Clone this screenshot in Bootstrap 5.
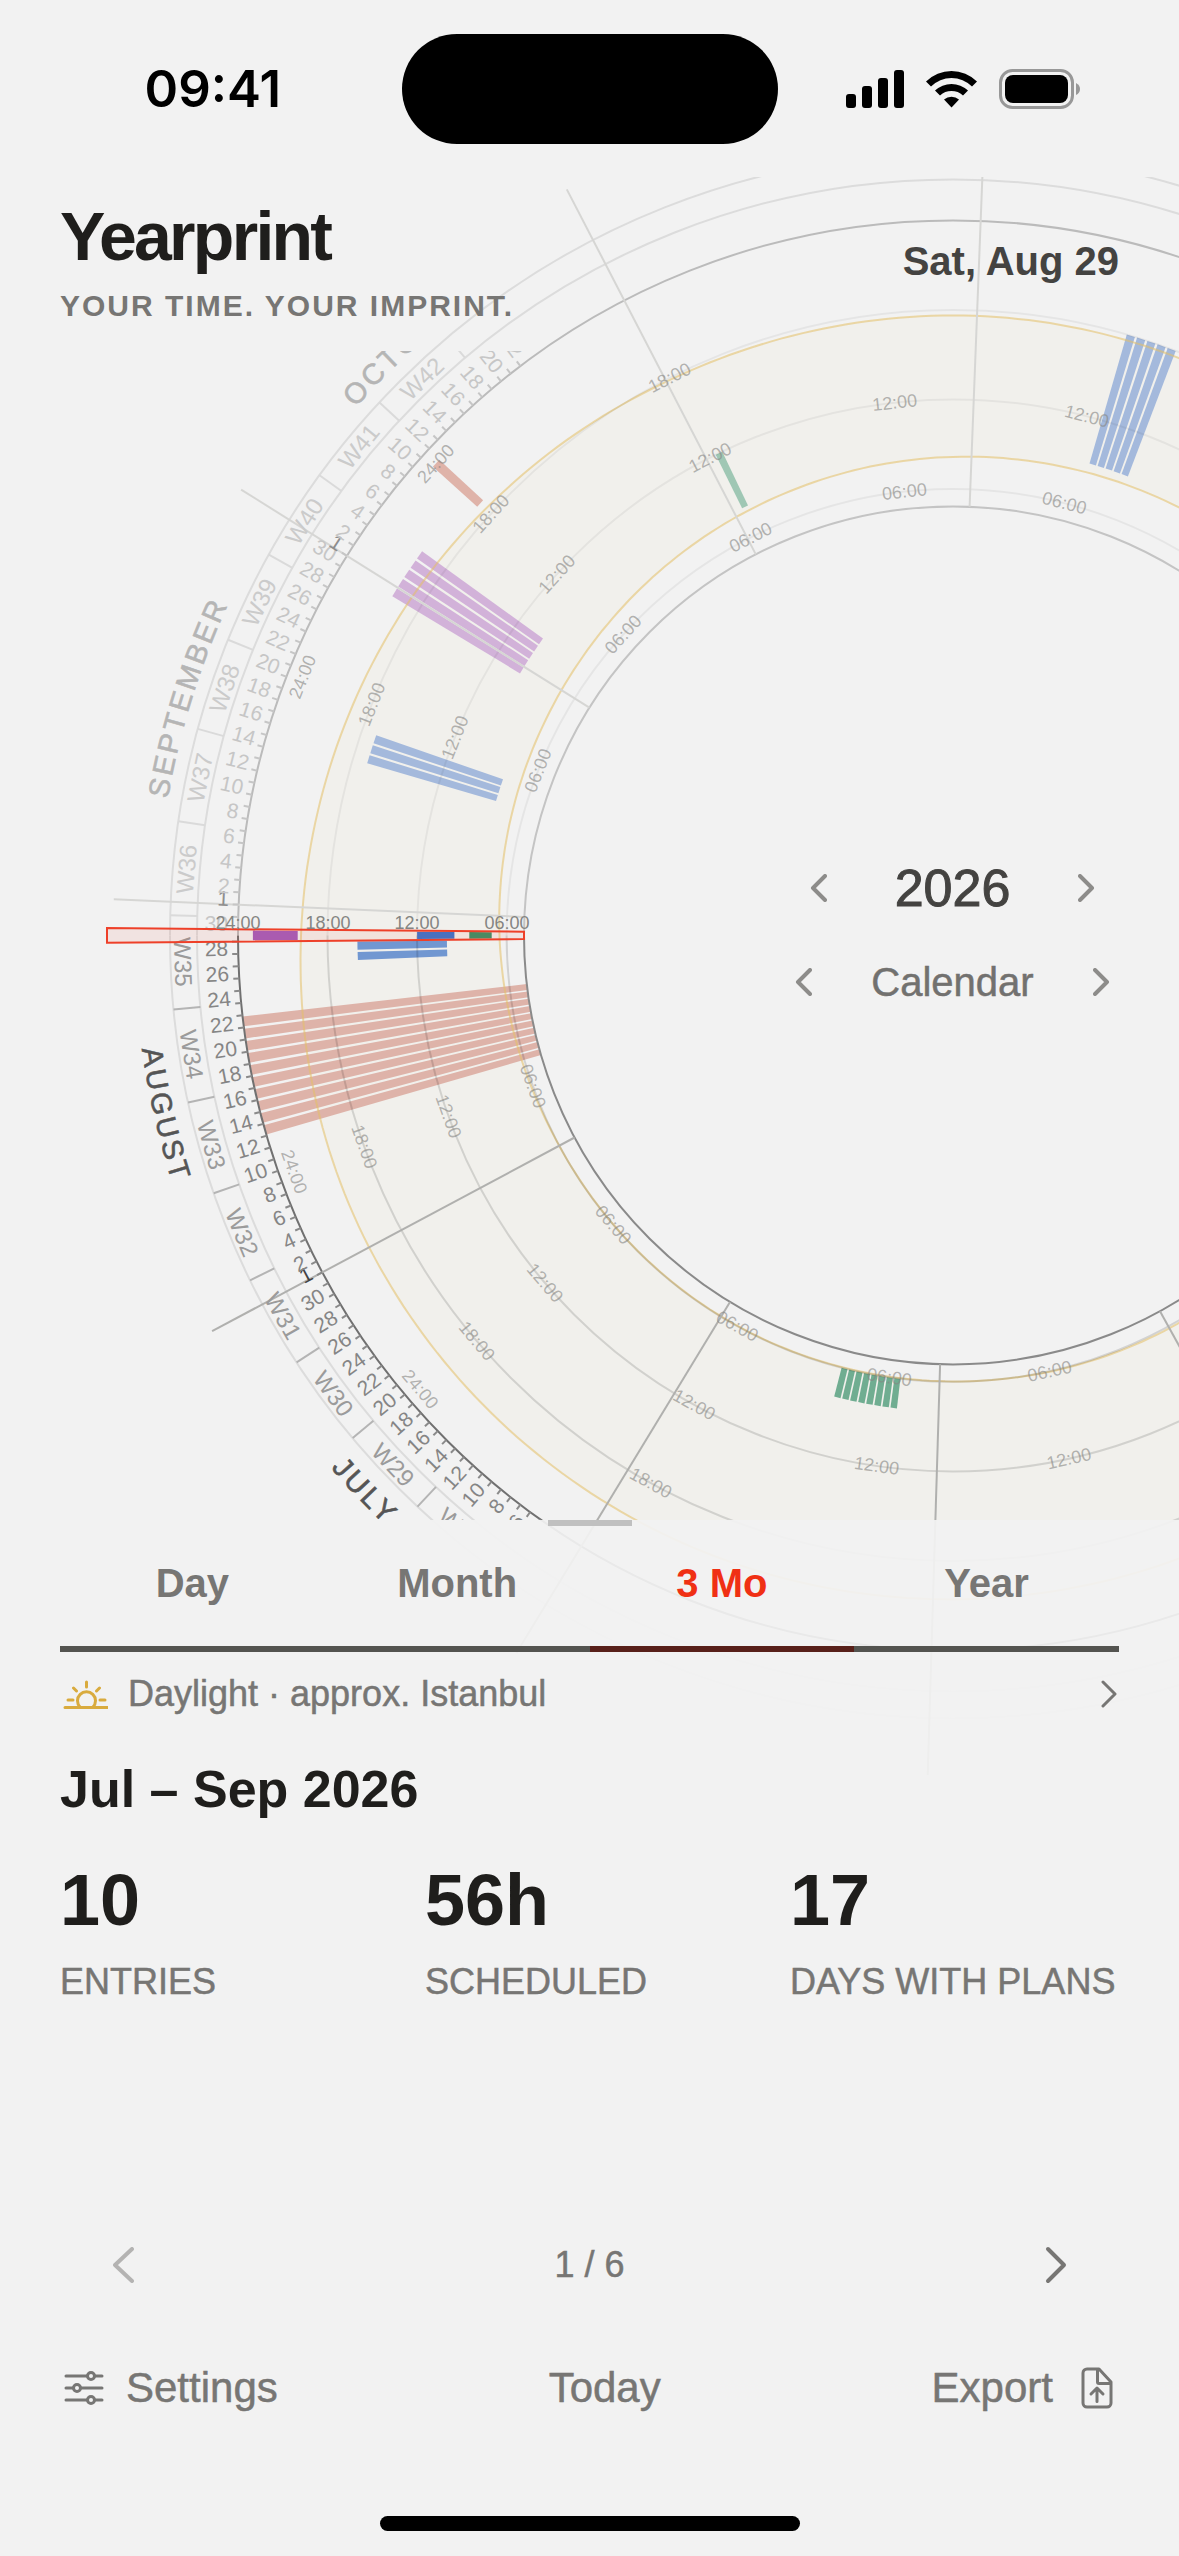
<!DOCTYPE html>
<html lang="en">
<head>
<meta charset="utf-8">
<meta name="viewport" content="width=device-width, initial-scale=1">
<title>Yearprint</title>
<link href="https://cdn.jsdelivr.net/npm/bootstrap@5.3.0/dist/css/bootstrap.min.css" rel="stylesheet">
<style>
  :root { --paper: #f2f2f2; --ink: #1f1e1c; --soft: #777674; --accent: #f03014; }
  body { background: var(--paper); color: var(--ink); font-family: "Liberation Sans", Arial, sans-serif; overflow-x: hidden; }
  button { background: none; border: 0; padding: 0; color: inherit; }
  svg { display: block; flex: none; }
  .stroke-icon { fill: none; stroke: currentColor; stroke-width: 3; stroke-linecap: round; stroke-linejoin: round; }
  .screen { z-index: 0; }
  .wheel { position: absolute; top: 0; left: 0; width: 100%; z-index: -1; }
  .status { padding: 34px 0 33px; }
  .status-side { flex: 1 1 100px; }
  .clock { font: 600 51px/60px Inter, sans-serif; color: #000; padding-left: 24px; }
  .signals { gap: 22px; padding-right: 30px; }
  .island { width: 376px; height: 110px; border-radius: 55px; background: #000; }
  .gutter { padding-left: 60px; padding-right: 60px; }
  .stage { padding-top: 23px; min-height: 1343px; }
  .brand { font-size: 68px; line-height: 72px; letter-spacing: -0.04em; }
  .tagline { font-size: 30px; line-height: 36px; letter-spacing: 2px; color: var(--soft); }
  .today-date { font-size: 40px; line-height: 48px; padding-top: 37px; color: #444341; }
  .hub { width: 453px; margin-top: 534px; gap: 40px; }
  .hub svg { color: #8d8c8a; stroke-width: 4; }
  .hub-btn { width: 44px; display: flex; justify-content: center; }
  .hub-year { font-size: 52px; line-height: 60px; gap: 54px; color: #444341; -webkit-text-stroke: 1px; }
  .hub-mode { font-size: 40px; line-height: 48px; gap: 46px; color: #72716f; -webkit-text-stroke: .5px; }
  .sheet { background: rgba(242, 242, 242, .93); }
  .grip { width: 84px; height: 6px; background: #c0c0c0; }
  .tab-btn { flex: 1 1 0; height: 126px; padding-bottom: 6px; font-size: 40px; font-weight: 700; color: var(--soft); border-bottom: 6px solid #545450; }
  .tab-btn.active { color: var(--accent); border-color: #58201a; }
  .daylight { height: 84px; gap: 20px; font-size: 36px; color: var(--soft); -webkit-text-stroke: .5px; }
  .sun { color: #d9ab3e; }
  .period { font-size: 52px; line-height: 60px; margin-top: 23px; }
  .stats { display: grid; grid-template-columns: repeat(3, minmax(0, 1fr)); gap: 36px; margin-top: 41px; }
  .stat-value { font-size: 72px; line-height: 80px; }
  .stat-label { font-size: 36px; line-height: 44px; margin-top: 20px; color: var(--soft); white-space: nowrap; -webkit-text-stroke: .5px; }
  .pager { height: 88px; margin-top: 217px; padding: 0 48px; font-size: 36px; color: var(--soft); -webkit-text-stroke: .5px; }
  .pager svg { stroke-width: 4; }
  .actions { height: 72px; margin-top: 42px; font-size: 42px; color: var(--soft); -webkit-text-stroke: .5px; }
  .actions button { display: flex; align-items: center; gap: 18px; }
  .home { width: 420px; height: 15px; border-radius: 8px; background: #000; margin: 93px auto 24px; }
</style>
<script src="https://cdn.jsdelivr.net/npm/bootstrap@5.3.0/dist/js/bootstrap.bundle.min.js"></script>
</head>
<body>
<main class="screen position-relative">
  <svg class="wheel" id="wheel" viewBox="0 0 1179 1800" role="img" aria-label="Year wheel"></svg>

  <div class="status d-flex align-items-center">
    <div class="status-side clock text-center">09:41</div>
    <div class="island"></div>
    <div class="status-side signals d-flex justify-content-center align-items-center">
      <svg width="58" height="38" viewBox="0 0 58 38"><rect y="24" width="10" height="14" rx="3"/><rect x="16" y="16" width="10" height="22" rx="3"/><rect x="32" y="8" width="10" height="30" rx="3"/><rect x="48" width="10" height="38" rx="3"/></svg>
      <svg width="51" height="38" viewBox="0 0 51 38"><path d="M0 11.500A36 36 0 0 1 51 11.500L46 16.500A29 29 0 0 0 5 16.500Z"/><path d="M9 20.500A24 24 0 0 1 42 20.500L37 25.500A17 17 0 0 0 14 25.500Z"/><path d="M18 29.500A11.500 11.500 0 0 1 33 29.500L25.500 37.500Z"/></svg>
      <svg width="82" height="40" viewBox="0 0 82 40"><rect x="1.500" y="1.500" width="72" height="37" rx="12" fill="none" stroke="#989898" stroke-width="3"/><rect x="6" y="6" width="63" height="28" rx="8"/><path d="M77 14Q81 16 81 20T77 26Z" fill="#989898"/></svg>
    </div>
  </div>

  <section class="stage d-flex flex-column">
    <header class="gutter d-flex justify-content-between align-items-start">
      <div>
        <h1 class="brand fw-bold m-0">Yearprint</h1>
        <p class="tagline fw-bold mt-3 mb-0">YOUR TIME. YOUR IMPRINT.</p>
      </div>
      <div class="today-date fw-bold">Sat, Aug 29</div>
    </header>
    <div class="hub ms-auto d-flex flex-column">
      <div class="hub-year d-flex justify-content-center align-items-center">
        <button class="hub-btn" aria-label="Previous year"><svg class="stroke-icon" width="17" height="28" viewBox="0 0 17 28"><path d="M15 2 3 14l12 12"/></svg></button>
        <span>2026</span>
        <button class="hub-btn" aria-label="Next year"><svg class="stroke-icon" width="17" height="28" viewBox="0 0 17 28"><path d="m2 2 12 12L2 26"/></svg></button>
      </div>
      <div class="hub-mode d-flex justify-content-center align-items-center">
        <button class="hub-btn" aria-label="Previous view"><svg class="stroke-icon" width="17" height="28" viewBox="0 0 17 28"><path d="M15 2 3 14l12 12"/></svg></button>
        <span>Calendar</span>
        <button class="hub-btn" aria-label="Next view"><svg class="stroke-icon" width="17" height="28" viewBox="0 0 17 28"><path d="m2 2 12 12L2 26"/></svg></button>
      </div>
    </div>
  </section>

  <section class="sheet">
    <div class="grip mx-auto"></div>
    <div class="gutter">
      <div class="d-flex" role="tablist">
        <button class="tab-btn" role="tab">Day</button>
        <button class="tab-btn" role="tab">Month</button>
        <button class="tab-btn active" role="tab" aria-selected="true">3 Mo</button>
        <button class="tab-btn" role="tab">Year</button>
      </div>
      <button class="daylight d-flex align-items-center w-100">
        <svg class="stroke-icon sun" width="48" height="48" viewBox="0 0 48 48"><path d="M5 37.500h43M20 37a9 9 0 1 1 13 0M26.500 12v5M13.500 18l3 3M39.500 18l-3 3M8 30h5M40 30h5"/></svg>
        <span>Daylight · approx. Istanbul</span>
        <svg class="stroke-icon ms-auto" width="20" height="28" viewBox="0 0 20 28"><path d="m4 2 12 12L4 26"/></svg>
      </button>
      <h2 class="period fw-bold mb-0">Jul – Sep 2026</h2>
      <div class="stats">
        <div><div class="stat-value fw-bold">10</div><div class="stat-label">ENTRIES</div></div>
        <div><div class="stat-value fw-bold">56h</div><div class="stat-label">SCHEDULED</div></div>
        <div><div class="stat-value fw-bold">17</div><div class="stat-label">DAYS WITH PLANS</div></div>
      </div>
      <div class="pager d-flex justify-content-between align-items-center">
        <button aria-label="Previous page" class="opacity-50"><svg class="stroke-icon" width="30" height="40" viewBox="0 0 30 40"><path d="M24 4 7 20l17 16"/></svg></button>
        <span>1 / 6</span>
        <button aria-label="Next page"><svg class="stroke-icon" width="30" height="40" viewBox="0 0 30 40"><path d="m7 4 16 16L7 36"/></svg></button>
      </div>
      <div class="actions d-flex justify-content-between align-items-center">
        <button>
          <svg class="stroke-icon" width="48" height="36" viewBox="0 0 48 36"><path d="M6 7h21M35 7h7M6 19h7M21 19h21M6 31h21M35 31h7"/><circle cx="31" cy="7" r="3.500"/><circle cx="17" cy="19" r="3.500"/><circle cx="31" cy="31" r="3.500"/></svg>
          <span>Settings</span>
        </button>
        <button>Today</button>
        <button>
          <span>Export</span>
          <svg class="stroke-icon" width="48" height="48" viewBox="0 0 48 48"><path d="M28 6H16a4 4 0 0 0-4 4v30a4 4 0 0 0 4 4h20a4 4 0 0 0 4-4V19zM26.500 6v13a1.500 1.500 0 0 0 1.500 1.500h12M26 38.500V26M20 31l6-6 6 6"/></svg>
        </button>
      </div>
    </div>
    <div class="home"></div>
  </section>
</main>

<script>
// The wheel turns so that today sits at nine o'clock. Angles are degrees clockwise from there.
const CX = 953, CY = 935.4, DAY = 360 / 365, INNER = 429, OUTER = 715;
const hourR = h => OUTER - (24 - h) * 14.92;
const pt = (r, a) => {
  const t = a * Math.PI / 180;
  return (CX - r * Math.cos(t)).toFixed(1) + ' ' + (CY - r * Math.sin(t)).toFixed(1);
};
const xy = (r, a) => pt(r, a).split(' ');
const out = [], txt = [];
const arc = (r, future, color, w) => {
  const s = future ? 1 : 0, q = future ? 90 : -90, A = `A${r} ${r} 0 0 ${s} `;
  out.push(`<path d="M${pt(r, 0)}${A}${pt(r, q)}${A}${pt(r, 2 * q)}" fill="none" stroke="${color}" stroke-width="${w}"/>`);
};
const ray = (r1, r2, a, color, w) =>
  `<path d="M${pt(r1, a)}L${pt(r2, a)}" stroke="${color}" stroke-width="${w}"/>`;
const label = (s, r, a, rot, size, color, anchor = 'middle') => {
  const [x, y] = xy(r, a);
  txt.push(`<text transform="translate(${x} ${y}) rotate(${rot.toFixed(2)})" y="${Math.round(size * .36)}" font-size="${size}" fill="${color}" text-anchor="${anchor}">${s}</text>`);
};
const slot = (d, h1, h2, color, half = .39) => {
  const a = d * DAY, r1 = h1 === null ? INNER : hourR(h1), r2 = hourR(h2);
  return `<path d="M${pt(r1, a - half)}L${pt(r2, a - half)}L${pt(r2, a + half)}L${pt(r1, a + half)}Z" fill="${color}"/>`;
};

// Daylight band
const rise = [[-125,449],[-90,446],[-60,446],[-28,446.5],[-14,449.5],[0,453.5],[15,457.5],[32,462],[62,471],[92,479],[118,484],[130,485]];
const set = [[-125,662],[-90,664],[-58,665],[-28,662],[-14,658],[0,652],[15,645.5],[31,638.5],[45,631.5],[63,623.5],[78,620.5],[92,620],[112,620],[130,621]];
const curve = t => {
  const p = [];
  for (let i = 0; i < t.length - 1; i++) {
    const a = t[Math.max(i - 1, 0)], b = t[i], c = t[i + 1], d = t[Math.min(i + 2, t.length - 1)];
    const w = c[0] - b[0], m1 = (c[1] - a[1]) / (c[0] - a[0]) * w, m2 = (d[1] - b[1]) / (d[0] - b[0]) * w;
    for (let k = 0; k < w; k++) {
      const s = k / w, q = s * s, u = q * s;
      p.push(pt((2*u-3*q+1)*b[1] + (u-2*q+s)*m1 + (3*q-2*u)*c[1] + (u-q)*m2, b[0] + k));
    }
  }
  return p;
};
const inner = curve(rise), outer = curve(set);
out.push(`<path d="M${inner.join('L')}L${[...outer].reverse().join('L')}Z" fill="#f1f0ec"/>`);

// Planned entries: first day, last day, start hour, end hour, colour
[[-16,-7,null,24,'#deb3a9'],[-2,-1,10,16,'#7197d1'],[17,19,8,17,'#a4b9dc'],[32,36,10,20,'#d2b2d9'],
 [43,43,19,23,'#dfb3a9'],[65,65,8,12,'#9fc7b4'],[108,112,9,18,'#a4b9dc'],[-84,-77,6,8,'#70ad91']]
.forEach(([a, b, h1, h2, c]) => { for (let d = a; d <= b; d++) out.push(slot(d, h1, h2, c)); });

out.push(`<path d="M${inner.join('L')}" fill="none" stroke="#e3bf66" stroke-opacity=".55" stroke-width="2"/>`);
out.push(`<path d="M${outer.join('L')}" fill="none" stroke="#e3bf66" stroke-opacity=".55" stroke-width="2"/>`);

// Rings
[6, 12, 18].forEach(h => { arc(hourR(h), true, 'rgba(0,0,0,.05)', 2); arc(hourR(h), false, 'rgba(0,0,0,.13)', 2); });
[756, 783].forEach(r => { arc(r, true, '#dcdcdc', 2); arc(r, false, '#dcdcdc', 2); });
arc(INNER, true, '#c4c4c4', 2); arc(INNER, false, '#8a8a8a', 2);
arc(OUTER, true, '#bbbbbb', 2); arc(OUTER, false, '#707070', 2);

// Month lines
[2.5, 32.5, 63.5, 93.5].forEach(d => out.push(ray(INNER, 840, d * DAY, '#d6d6d4', 2)));
[-28.5, -59.5, -89.5, -120.5].forEach(d => out.push(ray(INNER, 840, d * DAY, '#b0b0ae', 2)));

// Day ticks and numbers, then weeks
const t0 = Date.UTC(2026, 7, 29);
for (let d = -72; d <= 54; d++) {
  const future = d > 0, n = new Date(t0 + d * 864e5).getUTCDate();
  txt.push(ray(OUTER, 721, (d - .5) * DAY, future ? '#c6c6c6' : '#8a8a8a', 2));
  if (d !== 0 && (n === 1 || n % 2 === 0))
    label(n, 725, d * DAY, d * DAY, 21, n === 1 ? (future ? '#8e8e8e' : '#444') : (future ? '#c6c6c6' : '#858585'), 'end');
}
for (let w = 28; w <= 43; w++) {
  const a = (1.5 + (w - 36) * 7) * DAY, mid = a + 3.5 * DAY, future = w > 35;
  txt.push(ray(756, 783, a, future ? '#dadada' : '#b4b4b4', 2));
  if (w < 43) label('W' + w, 770, mid, future ? mid - 90 : mid + 90, 24, future ? '#cbcbcb' : '#9b9b9b');
}
const monthName = (s, d, future) => {
  const a = d * DAY, r = future ? 797 : 819, id = 'm' + s, c = future ? '#b5b5b5' : '#555';
  txt.push(`<path id="${id}" d="M${future ? pt(r, a - 14) : pt(r, a + 14)}A${r} ${r} 0 0 ${future ? 1 : 0} ${future ? pt(r, a + 14) : pt(r, a - 14)}" fill="none"/>` +
    `<text font-size="29" letter-spacing="3" fill="${c}" stroke="${c}" stroke-width=".6"><textPath href="#${id}" startOffset="50%" text-anchor="middle">${s}</textPath></text>`);
};
monthName('SEPTEMBER', 17.5, true);
monthName('OCTOBER', 48, true);
monthName('AUGUST', -13, false);
monthName('JULY', -44, false);

// Hour labels round the wheel
for (let i = 0; i < 5; i++) [21.68 + 20.69 * i, -19.73 - 20.69 * i].forEach(a =>
  [[24, 700], [18, hourR(18)], [12, hourR(12)], [6, hourR(6)]].forEach(([h, r]) => {
    const y = +xy(r, a)[1];
    if (y > 340 && y < 1530) label(String(h).padStart(2, '0') + ':00', r, a, a > 0 ? a - 90 : a + 90, 18, '#85858299');
  }));

// Today
const beam = `M${pt(INNER, -.493)}L${pt(846, -.493)}L${pt(846, .493)}L${pt(INNER, .493)}Z`;
const today = `<path d="${beam}" fill="#f03014" fill-opacity=".07"/>` +
  slot(0, 20, 23, '#aa5bb0') + slot(0, 9.5, 12, '#4a70bf') + slot(0, 7, 8.5, '#4a8a62') +
  `<path d="${beam}" fill="none" stroke="#ee4029" stroke-width="2"/>` +
  [24, 18, 12, 6].map(h => `<text x="${Math.round(CX - hourR(h))}" y="929" font-size="18" text-anchor="middle" fill="#858582">${String(h).padStart(2, '0')}:00</text>`).join('');

document.getElementById('wheel').innerHTML =
  `<defs><clipPath id="top"><rect y="177" width="1179" height="1620"/></clipPath><clipPath id="mid"><rect y="351" width="1179" height="1169"/></clipPath></defs>
   <g clip-path="url(#top)">${out.join('')}</g><g clip-path="url(#mid)">${txt.join('')}</g>${today}`;
</script>
</body>
</html>
